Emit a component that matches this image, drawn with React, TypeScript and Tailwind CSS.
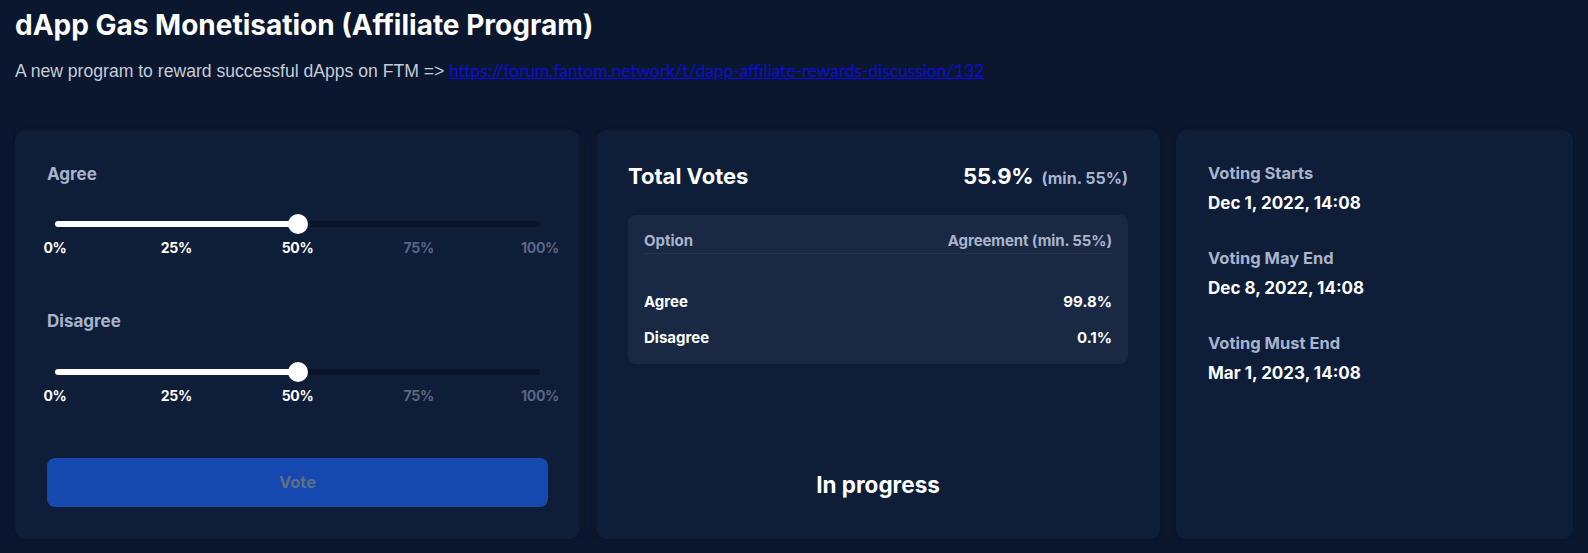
import React from "react";

const marks = [0, 25, 50, 75, 100];

function Slider({ value }: { value: number }) {
  return (
    <div className="mx-2">
      <div className="relative h-5">
        <div className="absolute left-0 right-0 top-[7px] h-[6px] rounded-full bg-[#0a1429]" />
        <div
          className="absolute left-0 top-[7px] h-[6px] rounded-full bg-white"
          style={{ width: `${value}%` }}
        />
        <div
          className="absolute top-0 h-5 w-5 -translate-x-1/2 rounded-full bg-white"
          style={{ left: `${value}%` }}
        />
      </div>
      <div className="relative mt-1 h-5">
        {marks.map((m) => (
          <span
            key={m}
            className={`absolute top-0 -translate-x-1/2 text-[14px] font-bold leading-5 tracking-[-0.3px] ${
              m <= value ? "text-white" : "text-[#5b6781]"
            }`}
            style={{ left: `${m}%` }}
          >
            {m}%
          </span>
        ))}
      </div>
    </div>
  );
}

export default function App() {
  return (
    <div className="min-h-screen bg-[#0b172e] px-[15px] pb-4 font-['Inter',sans-serif]">
      <h1 className="pt-[9px] text-[28px] font-bold leading-8 text-white">
        dApp Gas Monetisation (Affiliate Program)
      </h1>
      <p className="mt-[18px] font-['Liberation_Sans',Arial,sans-serif] text-[17.6px] leading-6 text-[#c5ccda]">
        A new program to reward successful dApps on FTM =&gt;{" "}
        <a
          href="#"
          className="font-['Lato',sans-serif] text-[17.3px] text-[#0b0bd8] underline"
        >
          https://forum.fantom.network/t/dapp-affiliate-rewards-discussion/132
        </a>
      </p>

      <div className="mt-[47px] grid grid-cols-[565fr_564fr_397fr] gap-4">
        {/* Card 1 */}
        <div className="flex flex-col rounded-[10px] bg-[#0e1d38] p-8 shadow-[0_0_4px_rgba(0,0,0,0.25)]">
          <div className="text-[17px] font-bold leading-6 text-[#a9b4cc]">Agree</div>
          <div className="mt-[28px]">
            <Slider value={50} />
          </div>
          <div className="mt-[51px] text-[17px] font-bold leading-6 text-[#a9b4cc]">Disagree</div>
          <div className="mt-[29px]">
            <Slider value={50} />
          </div>
          <button className="mt-[52px] h-[49px] w-full rounded-lg bg-[#1649b0] text-[16.5px] font-bold text-[#5e6d87]">
            Vote
          </button>
        </div>

        {/* Card 2 */}
        <div className="flex flex-col rounded-[10px] bg-[#0e1d38] p-8 shadow-[0_0_4px_rgba(0,0,0,0.25)]">
          <div className="flex items-baseline justify-between">
            <span className="text-[22px] font-bold leading-7 text-white">Total Votes</span>
            <span className="flex items-baseline gap-2">
              <span className="text-[22px] font-bold leading-7 tracking-[-0.2px] text-white">55.9%</span>
              <span className="text-[16px] font-bold text-[#a9b4cc]">(min. 55%)</span>
            </span>
          </div>
          <div className="mt-[25px] rounded-lg bg-[#192843] px-4 pb-4 pt-4">
            <div className="flex justify-between border-b border-[#24344f] pb-[2px] text-[15px] font-bold leading-5 text-[#a9b4cc]">
              <span>Option</span>
              <span className="tracking-[-0.1px]">Agreement (min. 55%)</span>
            </div>
            <div className="mt-[38px] flex justify-between text-[15px] font-bold leading-5 text-white">
              <span>Agree</span>
              <span>99.8%</span>
            </div>
            <div className="mt-4 flex justify-between text-[15px] font-bold leading-5 text-white">
              <span>Disagree</span>
              <span>0.1%</span>
            </div>
          </div>
          <div className="mb-[8px] mt-auto text-center text-[22.5px] font-bold leading-7 text-white">
            In progress
          </div>
        </div>

        {/* Card 3 */}
        <div className="flex flex-col rounded-[10px] bg-[#0e1d38] px-8 pb-8 pt-[31px] shadow-[0_0_4px_rgba(0,0,0,0.25)]">
          {[
            ["Voting Starts", "Dec 1, 2022, 14:08"],
            ["Voting May End", "Dec 8, 2022, 14:08"],
            ["Voting Must End", "Mar 1, 2023, 14:08"],
          ].map(([label, date], i) => (
            <div key={label} className={i > 0 ? "mt-[31px]" : ""}>
              <div className="text-[16.5px] font-bold leading-6 text-[#a9b4cc]">{label}</div>
              <div className="mt-[6px] text-[17px] font-bold leading-6 text-white">{date}</div>
            </div>
          ))}
        </div>
      </div>
    </div>
  );
}
